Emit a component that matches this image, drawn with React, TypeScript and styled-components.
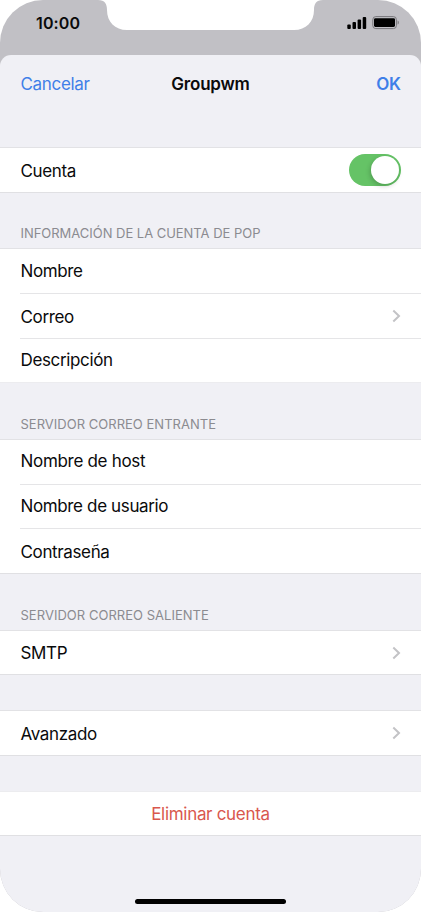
import React from "react";
import styled, { createGlobalStyle } from "styled-components";

const GlobalStyle = createGlobalStyle`
  * { box-sizing: border-box; }
  body { margin: 0; background: #fff; font-family: Inter, "Liberation Sans", sans-serif; }
`;

const Phone = styled.main`
  position: relative;
  display: flex;
  flex-direction: column;
  width: 421px;
  height: 912px;
  overflow: hidden;
  border-radius: 43px;
  background: #c1c0c5;
  color: #0a0a0b;
`;

const StatusBar = styled.header`
  display: flex;
  justify-content: space-between;
  height: 55px;
  padding: 15px 22px 0 36px;
`;

const Clock = styled.time`
  font-size: 16px;
  line-height: 17px;
  font-weight: 600;
  letter-spacing: 0.15px;
`;

const Indicators = styled.svg`
  display: block;
  width: 54px;
  height: 16px;
`;

const Notch = styled.svg`
  position: absolute;
  top: 0;
  left: 98px;
`;

const Sheet = styled.section`
  display: flex;
  flex-direction: column;
  flex: 1;
  border-radius: 11px 11px 0 0;
  background: #f0f0f5;
`;

const NavBar = styled.nav`
  display: grid;
  grid-template-columns: 1fr auto 1fr;
  align-items: center;
  height: 92px;
  padding: 0 20.5px 35px;
`;

const NavButton = styled.button<{ $strong?: boolean; $spacing: number }>`
  justify-self: ${(p) => (p.$strong ? "end" : "start")};
  padding: 0;
  border: 0;
  background: none;
  color: #3f7fe8;
  font: ${(p) => (p.$strong ? 600 : 400)} 17px/22px Inter, sans-serif;
  letter-spacing: ${(p) => p.$spacing}px;
`;

const Title = styled.h1`
  margin: 0;
  font-size: 17px;
  line-height: 22px;
  font-weight: 600;
  letter-spacing: -0.2px;
`;

const Caption = styled.h2<{ $height: number; $spacing: number }>`
  display: flex;
  align-items: flex-end;
  height: ${(p) => p.$height}px;
  margin: 0;
  padding: 0 20.5px 6px;
  color: #8b8b90;
  font-size: 13px;
  line-height: 17px;
  font-weight: 400;
  letter-spacing: ${(p) => p.$spacing}px;
`;

const Gap = styled.div`
  height: 35px;
`;

const Group = styled.div<{ $faintTop?: boolean; $faintBottom?: boolean }>`
  border-top: 1px solid ${(p) => (p.$faintTop ? "#ececef" : "#e2e2e5")};
  border-bottom: 1px solid ${(p) => (p.$faintBottom ? "#ececef" : "#e0e0e3")};
  background: #fff;
`;

const Row = styled.div<{ $height: number; $divided?: boolean; $danger?: boolean }>`
  display: flex;
  align-items: center;
  justify-content: ${(p) => (p.$danger ? "center" : "space-between")};
  height: ${(p) => p.$height}px;
  margin-left: ${(p) => (p.$danger ? 0 : 20)}px;
  padding-right: ${(p) => (p.$danger ? 0 : 20)}px;
  padding-left: ${(p) => (p.$danger ? 0 : 0.5)}px;
  border-bottom: ${(p) => (p.$divided ? "1px solid #e5e5e7" : "0")};
  color: ${(p) => (p.$danger ? "#d9574e" : "inherit")};
`;

const Label = styled.span<{ $drop?: number; $lift?: number; $spacing?: number }>`
  padding-top: ${(p) => (p.$drop ?? 0) * 2}px;
  padding-bottom: ${(p) => (p.$lift ?? 0) * 2}px;
  font-size: 17px;
  line-height: 22px;
  letter-spacing: ${(p) => p.$spacing ?? -0.36}px;
`;

const Toggle = styled.button`
  display: flex;
  justify-content: flex-end;
  width: 52px;
  height: 32px;
  padding: 2px;
  border: 0;
  border-radius: 16px;
  background: #65c366;
`;

const Knob = styled.span`
  width: 28px;
  height: 28px;
  border-radius: 50%;
  background: #fff;
  box-shadow: -1px 2px 5px rgba(0, 0, 0, 0.2);
`;

const HomeIndicator = styled.div`
  width: 151px;
  height: 5px;
  margin: auto auto 8px 135px;
  border-radius: 3px;
  background: #000;
`;

const Chevron = () => (
  <svg width="9" height="14" viewBox="0 0 9 14" fill="none" stroke="#c3c3c6" strokeWidth="2">
    <path d="M1.3 1.6 7 7l-5.7 5.4" />
  </svg>
);

export default function App() {
  return (
    <>
      <GlobalStyle />
      <Phone>
        <StatusBar>
          <Clock>10:00</Clock>
          <Indicators viewBox="0 0 54 16">
            <rect x="2.3" y="9.6" width="3.5" height="4.4" rx="1" />
            <rect x="7.5" y="7" width="3.5" height="7" rx="1" />
            <rect x="12.6" y="4.6" width="3.5" height="9.4" rx="1" />
            <rect x="17.7" y="2" width="3.5" height="12" rx="1" />
            <rect x="27.8" y="1.6" width="23.6" height="12" rx="3" fill="none" stroke="#77767a" />
            <rect x="29" y="3.2" width="21" height="8.8" rx="1.4" />
            <path d="M52.6 5.6c1.6.5 1.6 3.5 0 4z" fill="#77767a" />
          </Indicators>
        </StatusBar>
        <Sheet>
          <NavBar>
            <NavButton $spacing={-0.33}>Cancelar</NavButton>
            <Title>Groupwm</Title>
            <NavButton $strong $spacing={-0.4}>OK</NavButton>
          </NavBar>
          <Group>
            <Row $height={44}>
              <Label $drop={1}>Cuenta</Label>
              <Toggle aria-label="Cuenta" role="switch" aria-checked="true">
                <Knob />
              </Toggle>
            </Row>
          </Group>
          <Caption $height={55} $spacing={-0.03}>INFORMACIÓN DE LA CUENTA DE POP</Caption>
          <Group $faintBottom>
            <Row $height={45} $divided><Label>Nombre</Label></Row>
            <Row $height={45} $divided><Label $drop={1}>Correo</Label><Chevron /></Row>
            <Row $height={43}><Label $lift={1}>Descripción</Label></Row>
          </Group>
          <Caption $height={56} $spacing={0.02}>SERVIDOR CORREO ENTRANTE</Caption>
          <Group>
            <Row $height={45} $divided><Label $lift={1} $spacing={-0.3}>Nombre de host</Label></Row>
            <Row $height={44} $divided><Label $lift={1}>Nombre de usuario</Label></Row>
            <Row $height={44}><Label $drop={1}>Contraseña</Label></Row>
          </Group>
          <Caption $height={56} $spacing={0.03}>SERVIDOR CORREO SALIENTE</Caption>
          <Group>
            <Row $height={43}><Label>SMTP</Label><Chevron /></Row>
          </Group>
          <Gap />
          <Group>
            <Row $height={44}><Label $drop={0.5}>Avanzado</Label><Chevron /></Row>
          </Group>
          <Gap />
          <Group $faintTop>
            <Row $height={43} $danger><Label $spacing={-0.3}>Eliminar cuenta</Label></Row>
          </Group>
          <HomeIndicator />
        </Sheet>
        <Notch width="225" height="30" viewBox="0 0 225 30" fill="#fff">
          <path d="M0 0C7 0 9 4 9 10C9 22 17 30 29 30H196C208 30 216 22 216 10C216 4 218 0 225 0Z" />
        </Notch>
      </Phone>
    </>
  );
}
